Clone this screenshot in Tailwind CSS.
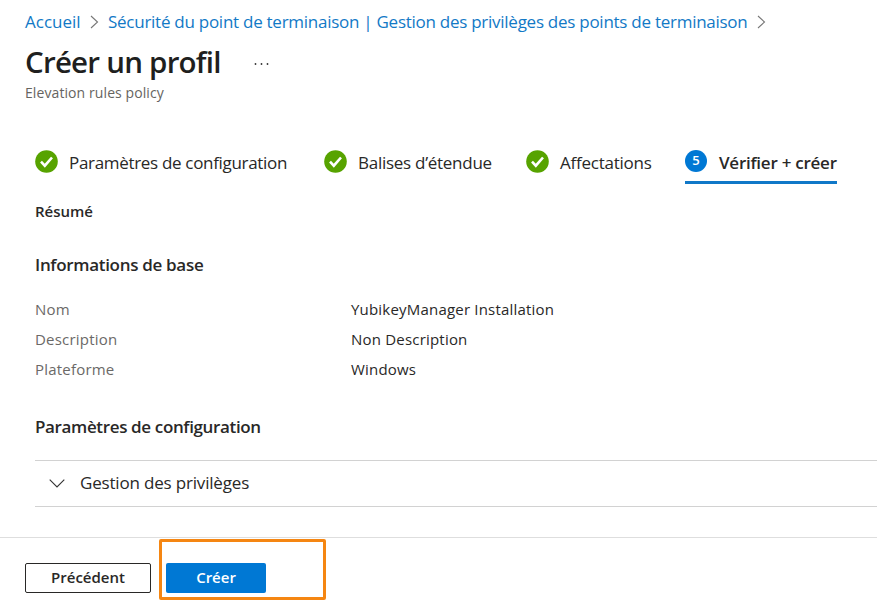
<!DOCTYPE html>
<html lang="fr">
<head>
  <meta charset="UTF-8">
  <title>Créer un profil</title>
  <script src="https://cdn.jsdelivr.net/npm/@tailwindcss/browser@4"></script>
</head>
<body class="h-screen overflow-hidden bg-white font-['Open_Sans','Noto_Sans',sans-serif] text-[#292827] whitespace-nowrap flex flex-col">

  <header class="pl-[25px] pt-2">
    <nav class="flex items-center h-7 text-[17px] text-[#1279c6]">
      <a href="#" class="w-[55px]">Accueil</a>
      <svg class="w-[9px] h-3.5 ml-[10px] mr-[9px]" viewBox="0 0 9 14" fill="none" stroke="#777" stroke-width="1.1"><path d="M1 1l6.5 6L1 13"/></svg>
      <a href="#" class="w-[640px] tracking-[-0.265px]">Sécurité du point de terminaison | Gestion des privilèges des points de terminaison</a>
      <svg class="w-[9px] h-3.5 ml-[9px]" viewBox="0 0 9 14" fill="none" stroke="#777" stroke-width="1.1"><path d="M1 1l6.5 6L1 13"/></svg>
    </nav>
    <div class="flex items-center h-[47px]">
      <h1 class="w-[229px] pt-[5px] text-[29.5px] tracking-[-0.77px] font-semibold text-[#201f1e]">Créer un profil</h1>
      <svg class="w-4 h-1 mt-[9px]" viewBox="0 0 16 4" fill="#333"><circle cx="1.5" cy="2" r=".9"/><circle cx="7.5" cy="2" r=".9"/><circle cx="13.5" cy="2" r=".9"/></svg>
    </div>
    <p class="h-5 leading-5 text-sm tracking-[0.09px] text-[#66645f]">Elevation rules policy</p>
  </header>

  <main class="flex-1 pl-[35px] pt-[45px]">
    <!-- Étapes -->
    <div class="flex h-9 text-[17px]">
      <div class="flex w-[289px] h-7">
        <svg class="w-[23px] h-[23px] mt-[1.5px] mr-[11px]" viewBox="0 0 23 23"><circle cx="11.5" cy="11.5" r="11.3" fill="#57a300"/><path d="M6 11.7l3.8 4L17 7.5" fill="none" stroke="#fff" stroke-width="2.6"/></svg>
        <span class="leading-[30px] tracking-[-0.32px]">Paramètres de configuration</span>
      </div>
      <div class="flex w-[202px] h-7">
        <svg class="w-[23px] h-[23px] mt-[1.5px] mr-[11px]" viewBox="0 0 23 23"><circle cx="11.5" cy="11.5" r="11.3" fill="#57a300"/><path d="M6 11.7l3.8 4L17 7.5" fill="none" stroke="#fff" stroke-width="2.6"/></svg>
        <span class="leading-[30px] tracking-[-0.27px]">Balises d’étendue</span>
      </div>
      <div class="flex w-[159px] h-7">
        <svg class="w-[23px] h-[23px] mt-[1.5px] mr-[11px]" viewBox="0 0 23 23"><circle cx="11.5" cy="11.5" r="11.3" fill="#57a300"/><path d="M6 11.7l3.8 4L17 7.5" fill="none" stroke="#fff" stroke-width="2.6"/></svg>
        <span class="leading-[30px] tracking-[-0.25px]">Affectations</span>
      </div>
      <div class="flex w-[152px] border-b-[3px] border-[#1078c8] font-semibold">
        <span class="shrink-0 w-[22px] h-[22px] mt-0.5 mr-3 rounded-full bg-[#0078d4] text-white text-[13px] leading-[21px] text-center">5</span>
        <span class="leading-[30px] tracking-[-0.25px]">Vérifier + créer</span>
      </div>
    </div>

    <h2 class="mt-[17px] h-5 leading-5 text-[15px] font-semibold">Résumé</h2>

    <h3 class="mt-8 h-6 leading-6 text-[17px] tracking-[-0.31px] font-semibold">Informations de base</h3>
    <dl class="mt-[17px] grid grid-cols-[316px_1fr] auto-rows-[30px] leading-[30px] text-[15px] tracking-[0.2px]">
      <dt class="text-[#6b6967]">Nom</dt>
      <dd>YubikeyManager Installation</dd>
      <dt class="text-[#6b6967]">Description</dt>
      <dd>Non Description</dd>
      <dt class="text-[#6b6967]">Plateforme</dt>
      <dd>Windows</dd>
    </dl>

    <h3 class="mt-[31px] h-6 leading-6 text-[17px] tracking-[-0.36px] font-semibold">Paramètres de configuration</h3>
    <div class="mt-[21px] flex items-center h-[47px] border-y border-[#d2d2d2] text-[17px] tracking-[-0.18px]">
      <svg class="w-4 h-[9px] ml-[14px] mr-[15px] mb-px" viewBox="0 0 16 9" fill="none" stroke="#333" stroke-width="1.1"><path d="M.7.7L8 8 15.3.7"/></svg>
      <span class="pb-0.5">Gestion des privilèges</span>
    </div>
  </main>

  <footer class="relative h-[70px] border-t border-[#dedede] pl-[25px] pt-[25px] flex gap-[15px] text-[15px] font-semibold">
    <button class="w-[126px] h-[30px] pb-0.5 border border-[#292827] rounded-xs">Précédent</button>
    <button class="w-[100px] h-[30px] pb-0.5 bg-[#0078d4] text-white rounded-xs">Créer</button>
    <!-- cadre autour du bouton Créer -->
    <div class="absolute left-[159px] top-px w-[167px] h-[61px] border-3 border-[#f58612] rounded-xs"></div>
  </footer>

</body>
</html>
